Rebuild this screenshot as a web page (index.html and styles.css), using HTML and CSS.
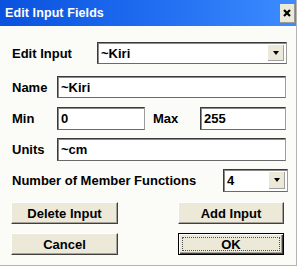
FILE: index.html
```html
<!DOCTYPE html>
<html lang="en">
  <head>
    <meta charset="UTF-8" />
    <meta name="viewport" content="width=device-width, initial-scale=1.0" />
    <title>Edit Input Fields</title>
    <link rel="stylesheet" href="styles.css">
  </head>
  <body>
    <div class="window">
      <div class="titlebar">
        <span class="title">Edit Input Fields</span>
        <div class="close">
          <svg width="8" height="8" viewBox="0 0 8 8">
            <path d="M1 1 L7 7 M7 1 L1 7" stroke="#000" stroke-width="2.2" />
          </svg>
        </div>
      </div>
      <div class="content">
        <div class="row row-edit">
          <span class="label label-edit">Edit Input</span>
          <div class="select select-wide">
            <span class="select-text">~Kiri</span>
            <div class="arrow"><span class="tri"></span></div>
          </div>
        </div>
        <div class="row row-name">
          <span class="label label-short">Name</span>
          <div class="field field-wide">~Kiri</div>
        </div>
        <div class="row row-min">
          <span class="label label-short">Min</span>
          <div class="field field-min">0</div>
          <span class="label label-max">Max</span>
          <div class="field field-max">255</div>
        </div>
        <div class="row row-units">
          <span class="label label-short">Units</span>
          <div class="field field-wide">~cm</div>
        </div>
        <div class="row row-num">
          <span class="label">Number of Member Functions</span>
          <div class="select select-small">
            <span class="select-text">4</span>
            <div class="arrow"><span class="tri"></span></div>
          </div>
        </div>
        <div class="row row-btn1">
          <div class="btn btn-left">Delete Input</div>
          <div class="btn btn-right">Add Input</div>
        </div>
        <div class="row row-btn2">
          <div class="btn btn-left">Cancel</div>
          <div class="btn btn-right btn-default"><span class="focus">OK</span></div>
        </div>
      </div>
    </div>
  </body>
</html>
```

FILE: styles.css
```css
body {
  margin: 0;
  background-color: #ffffff;
  font-family: "Liberation Sans", Arial, sans-serif;
}
.window {
  width: 296px;
  height: 265px;
  background-color: #fbfbf8;
  border-right: 1px solid #b4b4b4;
  border-bottom: 1px solid #b4b4b4;
  display: flex;
  flex-direction: column;
}
.titlebar {
  height: 26px;
  background: linear-gradient(to right, #0a52de, #1f6cf0 50%, #3d8cff);
  display: flex;
  align-items: center;
  padding-left: 5px;
  padding-right: 1px;
}
.title {
  color: #ffffff;
  font-weight: bold;
  font-size: 12.5px;
  letter-spacing: 0.1px;
}
.close {
  margin-left: auto;
  width: 14px;
  height: 18px;
  background-color: #ece9d8;
  border-right: 1px solid #9a9a9a;
  border-bottom: 1px solid #9a9a9a;
  display: flex;
  align-items: center;
  justify-content: center;
}
.content {
  padding: 16px 9px 0 12px;
  display: flex;
  flex-direction: column;
}
.row {
  display: flex;
  align-items: center;
}
.label {
  font-weight: bold;
  font-size: 13px;
  color: #000000;
}
.label-edit {
  width: 85px;
}
.label-short {
  width: 45px;
}
.label-max {
  width: 47px;
  padding-left: 8px;
}
.row-edit {
  height: 22px;
}
.row-name {
  height: 22px;
  margin-top: 12px;
}
.row-min {
  height: 23px;
  margin-top: 9px;
}
.row-units {
  height: 23px;
  margin-top: 8px;
}
.row-num {
  height: 23px;
  margin-top: 8px;
  justify-content: space-between;
  padding-right: 0;
}
.row-btn1 {
  height: 22px;
  margin-top: 10px;
  justify-content: space-between;
}
.row-btn2 {
  height: 22px;
  margin-top: 9px;
  justify-content: space-between;
}
.field {
  box-sizing: border-box;
  height: 100%;
  background-color: #ffffff;
  border: 1px solid;
  border-color: #3a3a3a #9c9c9c #6a6a6a #3a3a3a;
  box-shadow: inset 1px 1px 0 #8a8a8a;
  padding-left: 3px;
  font-weight: bold;
  font-size: 13px;
  display: flex;
  align-items: center;
}
.field-wide {
  width: 229px;
}
.field-min {
  width: 88px;
}
.field-max {
  width: 86px;
}
.select {
  box-sizing: border-box;
  height: 100%;
  background-color: #ffffff;
  border: 1px solid;
  border-color: #3a3a3a #9c9c9c #6a6a6a #3a3a3a;
  box-shadow: inset 1px 1px 0 #8a8a8a;
  display: flex;
  align-items: center;
  padding: 2px 2px 2px 3px;
}
.select-wide {
  width: 190px;
}
.select-small {
  width: 65px;
  margin-right: -1px;
}
.select-text {
  font-weight: bold;
  font-size: 13px;
  flex: 1;
}
.arrow {
  width: 16px;
  height: 100%;
  background-color: #ece9d8;
  border-right: 1px solid #a0a0a0;
  border-bottom: 1px solid #a0a0a0;
  box-sizing: border-box;
  display: flex;
  align-items: center;
  justify-content: center;
}
.tri {
  width: 0;
  height: 0;
  border-left: 3.5px solid transparent;
  border-right: 3.5px solid transparent;
  border-top: 4px solid #000000;
}
.btn {
  box-sizing: border-box;
  height: 100%;
  background-color: #ece9d8;
  border: 1px solid;
  border-color: #ffffff #404040 #404040 #ffffff;
  box-shadow: inset -1px -1px 0 #a6a39a;
  font-weight: bold;
  font-size: 13px;
  color: #000000;
  display: flex;
  align-items: center;
  justify-content: center;
}
.btn-left {
  width: 107px;
  margin-left: -1px;
}
.btn-right {
  width: 106px;
  margin-right: 3px;
}
.btn-default {
  border: 1px solid #000000;
  box-shadow: inset 1px 1px 0 #ffffff, inset -1px -1px 0 #404040, inset -2px -2px 0 #a6a39a;
  padding: 3px;
}
.focus {
  flex: 1;
  align-self: stretch;
  border: 1px dotted #505050;
  display: flex;
  align-items: center;
  justify-content: center;
}
```
